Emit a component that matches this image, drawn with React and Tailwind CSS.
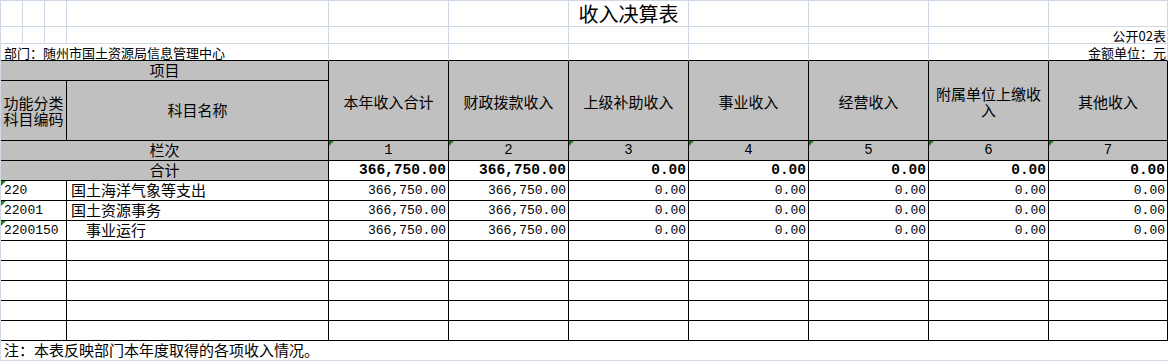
const cjk = { fontFamily: '"Noto Sans CJK SC", "Liberation Sans", sans-serif' };
const mono = { fontFamily: '"Liberation Mono", "Noto Sans CJK SC", monospace' };

const headers = ["本年收入合计", "财政拨款收入", "上级补助收入", "事业收入", "经营收入", "附属单位上缴收入", "其他收入"];

const totals = ["366,750.00", "366,750.00", "0.00", "0.00", "0.00", "0.00", "0.00"];

const rows = [
    { code: "220", name: "国土海洋气象等支出", indent: false, values: totals },
    { code: "22001", name: "国土资源事务", indent: false, values: totals },
    { code: "2200150", name: "事业运行", indent: true, values: totals },
];

// little green flag excel puts on "number stored as text"
function Flag() {
    return (
        <span className="absolute left-0 top-0 w-0 h-0 border-t-[5px] border-r-[5px] border-t-[#1e8a1e] border-r-transparent" />
    );
}

export default function App() {
    const blank = Array.from({ length: 11 });

    return (
        <div className="w-[1169px] h-[361px] bg-white text-black overflow-hidden">
            <div
                className="grid w-max border-l border-t border-[#d0d7e5] grid-cols-[22px_22px_22px_262px_repeat(6,120px)_119px] grid-rows-[26px_17px_17px_20px_60px_repeat(11,20px)]"
                style={cjk}
            >
                {/* ROW 1 - TITLE */}
                {blank.map((_, i) => (
                    <div key={`t${i}`} className="border-r border-b border-[#d0d7e5] flex items-center justify-center">
                        {i === 6 && <span className="text-[20px] leading-none whitespace-nowrap">收入决算表</span>}
                    </div>
                ))}

                {/* ROW 2 */}
                {blank.map((_, i) => (
                    <div key={`s${i}`} className="border-r border-b border-[#d0d7e5] flex items-center justify-end pr-[1px]">
                        {i === 10 && <span className="text-[13px] leading-none whitespace-nowrap">公开02表</span>}
                    </div>
                ))}

                {/* ROW 3 - DEPARTMENT */}
                <div className="col-span-4 border-r border-b border-r-[#d0d7e5] border-b-black flex items-center pl-[3px]">
                    <span className="text-[13px] leading-none whitespace-nowrap">部门：随州市国土资源局信息管理中心</span>
                </div>
                {Array.from({ length: 6 }).map((_, i) => (
                    <div key={`d${i}`} className="border-r border-b border-r-[#d0d7e5] border-b-black" />
                ))}
                <div className="border-r border-b border-r-[#d0d7e5] border-b-black flex items-center justify-end pr-[1px]">
                    <span className="text-[13px] leading-none whitespace-nowrap">金额单位：元</span>
                </div>

                {/* HEADER */}
                <div className="col-span-4 bg-[#c0c0c0] border-r border-b border-black flex items-center justify-center text-[15px]">
                    项目
                </div>
                {headers.map((h) => (
                    <div
                        key={h}
                        className="row-span-2 bg-[#c0c0c0] border-r border-b border-black flex items-center justify-center text-center text-[15px] leading-[16px] px-[4px] pt-[2px]"
                    >
                        {h}
                    </div>
                ))}
                <div className="col-span-3 bg-[#c0c0c0] border-r border-b border-black flex items-center justify-center text-center text-[15px] leading-[16px]">
                    功能分类科目编码
                </div>
                <div className="bg-[#c0c0c0] border-r border-b border-black flex items-center justify-center text-[15px]">
                    科目名称
                </div>

                {/* 栏次 */}
                <div className="col-span-4 bg-[#c0c0c0] border-r border-b border-black flex items-center justify-center text-[15px]">
                    栏次
                </div>
                {headers.map((h, i) => (
                    <div
                        key={`n${h}`}
                        className="relative bg-[#c0c0c0] border-r border-b border-black flex items-center justify-center text-[14px]"
                        style={mono}
                    >
                        <Flag />
                        {i + 1}
                    </div>
                ))}

                {/* 合计 */}
                <div className="col-span-4 bg-[#c0c0c0] border-r border-b border-black flex items-center justify-center text-[15px]">
                    合计
                </div>
                {totals.map((v, i) => (
                    <div
                        key={`tot${i}`}
                        className="border-r border-b border-black flex items-center justify-end pr-[2px] text-[14.5px] font-bold"
                        style={mono}
                    >
                        {v}
                    </div>
                ))}

                {/* DATA ROWS */}
                {rows.map((r) => (
                    <div key={r.code} className="contents">
                        <div className="relative col-span-3 border-r border-b border-black flex items-center pl-[3px] text-[13px]" style={mono}>
                            <Flag />
                            {r.code}
                        </div>
                        <div className={`border-r border-b border-black flex items-center text-[15px] whitespace-nowrap ${r.indent ? "pl-[19px]" : "pl-[4px]"}`}>
                            {r.name}
                        </div>
                        {r.values.map((v, i) => (
                            <div
                                key={i}
                                className="border-r border-b border-black flex items-center justify-end pr-[2px] text-[13px]"
                                style={mono}
                            >
                                {v}
                            </div>
                        ))}
                    </div>
                ))}

                {/* EMPTY ROWS */}
                {Array.from({ length: 5 }).map((_, r) => (
                    <div key={`e${r}`} className="contents">
                        <div className="col-span-3 border-r border-b border-black" />
                        {Array.from({ length: 8 }).map((_, i) => (
                            <div key={i} className="border-r border-b border-black" />
                        ))}
                    </div>
                ))}

                {/* NOTE */}
                <div className="col-span-11 border-b border-[#d0d7e5] flex items-center pl-[3px] text-[15px] whitespace-nowrap">
                    注：本表反映部门本年度取得的各项收入情况。
                </div>
            </div>
        </div>
    );
}
